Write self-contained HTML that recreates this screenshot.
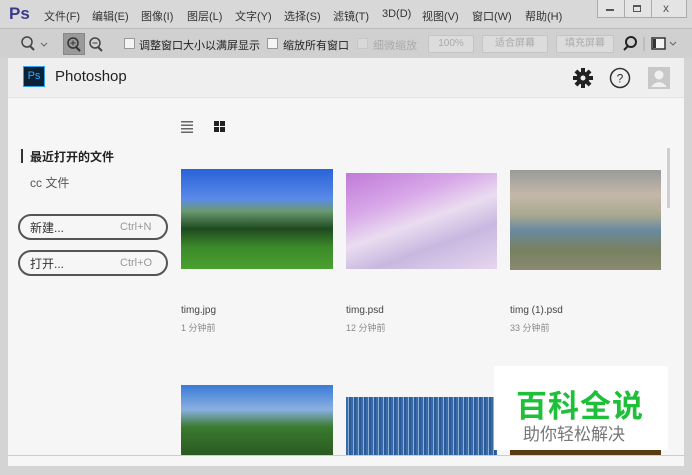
<!DOCTYPE html>
<html><head><meta charset="utf-8"><style>
*{margin:0;padding:0;box-sizing:border-box}
body{width:692px;height:475px;overflow:hidden;background:#d4d4d4;font-family:"Liberation Sans","Noto Sans CJK SC",sans-serif;position:relative}
.a{position:absolute}
.m{font-size:11px;color:#333;top:8px}
.tb{font-size:11px;color:#222}
.dis{color:#aaa}
.btn{border:1px solid #c4c4c4;background:#dcdcdc;color:#aaa;font-size:10px;text-align:center;line-height:16px;height:18px;top:35px}
.cb{width:11px;height:11px;border:1px solid #999;background:#f4f4f4;top:38px}
.fn{font-size:10px;color:#444}
.tm{font-size:9px;color:#888}
</style></head><body>
<div class="a" style="left:0;top:0;width:692px;height:28px;background:#d8d8d8"></div>
<div class="a" style="left:9px;top:4px;font-size:17px;font-weight:bold;color:#3a3a8c">Ps</div>
<div class="a m" style="left:44px">文件(F)</div>
<div class="a m" style="left:92px">编辑(E)</div>
<div class="a m" style="left:141px">图像(I)</div>
<div class="a m" style="left:187px">图层(L)</div>
<div class="a m" style="left:235px">文字(Y)</div>
<div class="a m" style="left:284px">选择(S)</div>
<div class="a m" style="left:333px">滤镜(T)</div>
<div class="a m" style="left:382px">3D(D)</div>
<div class="a m" style="left:422px">视图(V)</div>
<div class="a m" style="left:472px">窗口(W)</div>
<div class="a m" style="left:525px">帮助(H)</div>
<div class="a" style="left:597px;top:0;width:90px;height:18px;border:1px solid #aaa;border-top:0;background:#e4e4e4"></div>
<div class="a" style="left:624px;top:0;width:1px;height:18px;background:#aaa"></div>
<div class="a" style="left:651px;top:0;width:1px;height:18px;background:#aaa"></div>
<div class="a" style="left:606px;top:9px;width:8px;height:2px;background:#555"></div>
<div class="a" style="left:633px;top:5px;width:8px;height:7px;border:2px solid #555;border-width:2px 1px 1px 1px"></div>
<div class="a" style="left:663px;top:1px;font-size:12px;color:#555">x</div>
<div class="a" style="left:0;top:28px;width:692px;height:30px;background:#d0d0d0;border-top:1px solid #bbb"></div>
<svg class="a" style="left:20px;top:36px" width="30" height="16"><circle cx="7" cy="6" r="5" fill="none" stroke="#444" stroke-width="1.5"/><line x1="10" y1="10" x2="14" y2="14" stroke="#444" stroke-width="2"/><path d="M21 7l3 3 3-3" fill="none" stroke="#666"/></svg>
<div class="a" style="left:63px;top:33px;width:22px;height:22px;background:#9a9a9a;border:1px solid #888"></div>
<svg class="a" style="left:66px;top:37px" width="40" height="16"><circle cx="7" cy="6" r="5" fill="none" stroke="#333" stroke-width="1.5"/><line x1="10" y1="10" x2="14" y2="14" stroke="#333" stroke-width="2"/><path d="M4.5 6h5M7 3.5v5" stroke="#333"/><circle cx="29" cy="6" r="5" fill="none" stroke="#444" stroke-width="1.5"/><line x1="32" y1="10" x2="36" y2="14" stroke="#444" stroke-width="2"/><path d="M26.5 6h5" stroke="#444"/></svg>
<div class="a cb" style="left:124px"></div>
<div class="a tb" style="left:139px;top:37px">调整窗口大小以满屏显示</div>
<div class="a cb" style="left:267px"></div>
<div class="a tb" style="left:283px;top:37px">缩放所有窗口</div>
<div class="a cb" style="left:357px;border-color:#c8c8c8;background:#d8d8d8"></div>
<div class="a tb dis" style="left:373px;top:37px">细微缩放</div>
<div class="a btn" style="left:428px;width:46px">100%</div>
<div class="a btn" style="left:482px;width:66px">适合屏幕</div>
<div class="a btn" style="left:556px;width:58px">填充屏幕</div>
<svg class="a" style="left:622px;top:35px" width="60" height="18"><circle cx="9" cy="7" r="5" fill="none" stroke="#222" stroke-width="2"/><line x1="6" y1="11" x2="2" y2="15" stroke="#222" stroke-width="2"/><line x1="22" y1="2" x2="22" y2="16" stroke="#aaa"/><rect x="30" y="3" width="13" height="11" fill="#f4f4f4" stroke="#333" stroke-width="1.5"/><rect x="31" y="4" width="3" height="9" fill="#333"/><path d="M48 7l3 3 3-3" fill="none" stroke="#666"/></svg>
<div class="a" style="left:8px;top:58px;width:676px;height:408px;background:#f6f6f6"></div>
<div class="a" style="left:8px;top:58px;width:676px;height:40px;background:#efefef;border-bottom:1px solid #e2e2e2"></div>
<div class="a" style="left:23px;top:66px;width:22px;height:21px;background:#0b2236;border:1px solid #2fa3e6;color:#31a8ff;font-size:11px;line-height:19px;text-align:center">Ps</div>
<div class="a" style="left:55px;top:68px;font-size:15px;color:#222">Photoshop</div>
<svg class="a" style="left:572px;top:67px" width="100" height="22"><g transform="translate(11,11)" fill="#222"><circle r="6.5"/><g id="t"><rect x="-2" y="-10" width="4" height="20"/></g><use href="#t" transform="rotate(45)"/><use href="#t" transform="rotate(90)"/><use href="#t" transform="rotate(135)"/><circle r="2.5" fill="#efefef"/></g><circle cx="48" cy="11" r="9.5" fill="none" stroke="#333" stroke-width="1.5"/><text x="48" y="15.5" font-size="12" text-anchor="middle" fill="#333" font-family="Liberation Sans">?</text><rect x="76" y="0" width="22" height="22" fill="#c8c8c8"/><circle cx="87" cy="8" r="4.5" fill="#f0f0f0"/><path d="M79 20q8-10 16 0z" fill="#f0f0f0"/></svg>
<svg class="a" style="left:180px;top:120px" width="50" height="14"><g fill="#666"><rect x="1" y="1" width="12" height="1.5"/><rect x="1" y="4.5" width="12" height="1.5"/><rect x="1" y="8" width="12" height="1.5"/><rect x="1" y="11.5" width="12" height="1.5"/></g><g fill="#222"><rect x="34" y="1" width="5" height="5"/><rect x="40" y="1" width="5" height="5"/><rect x="34" y="7" width="5" height="5"/><rect x="40" y="7" width="5" height="5"/></g></svg>
<div class="a" style="left:21px;top:149px;width:2px;height:14px;background:#333"></div>
<div class="a" style="left:30px;top:148px;font-size:12px;color:#222;font-weight:bold">最近打开的文件</div>
<div class="a" style="left:30px;top:174px;font-size:12px;color:#555">cc 文件</div>
<div class="a" style="left:18px;top:214px;width:150px;height:26px;border:2px solid #555;border-radius:13px"></div>
<div class="a" style="left:30px;top:219px;font-size:12px;color:#333">新建...</div>
<div class="a" style="left:120px;top:221px;font-size:11px;color:#999">Ctrl+N</div>
<div class="a" style="left:18px;top:250px;width:150px;height:26px;border:2px solid #555;border-radius:13px"></div>
<div class="a" style="left:30px;top:255px;font-size:12px;color:#333">打开...</div>
<div class="a" style="left:120px;top:257px;font-size:11px;color:#999">Ctrl+O</div>
<div class="a" style="left:181px;top:169px;width:152px;height:100px;background:linear-gradient(180deg,#2a62d8 0%,#5a8ae8 30%,#6a9a70 42%,#1f4a20 60%,#3c8a2a 78%,#4aa030 100%)"></div>
<div class="a" style="left:346px;top:173px;width:151px;height:96px;background:linear-gradient(160deg,#c07ad8 0%,#d8a8e8 30%,#eadcf0 50%,#c8b8e0 70%,#e6d6ee 100%)"></div>
<div class="a" style="left:510px;top:170px;width:151px;height:100px;background:linear-gradient(180deg,#9a9a9a 0%,#c4b8a8 25%,#a8a890 45%,#6a8aa0 60%,#788060 80%,#8a8a70 100%)"></div>
<div class="a fn" style="left:181px;top:305px">timg.jpg</div>
<div class="a tm" style="left:181px;top:321px">1 分钟前</div>
<div class="a fn" style="left:346px;top:305px">timg.psd</div>
<div class="a tm" style="left:346px;top:321px">12 分钟前</div>
<div class="a fn" style="left:510px;top:305px">timg (1).psd</div>
<div class="a tm" style="left:510px;top:321px">33 分钟前</div>
<div class="a" style="left:181px;top:385px;width:152px;height:70px;background:linear-gradient(180deg,#3a7ad8 0%,#8ab0e0 35%,#3a7a30 60%,#2a5a20 100%)"></div>
<div class="a" style="left:346px;top:397px;width:151px;height:58px;background:repeating-linear-gradient(90deg,#3a6aa8 0 2px,#8ab0d8 2px 3px,#2a5a98 3px 5px)"></div>
<div class="a" style="left:510px;top:448px;width:151px;height:8px;background:#5a3a10"></div>
<div class="a" style="left:494px;top:366px;width:174px;height:84px;background:#fff"></div>
<div class="a" style="left:516px;top:381px;font-size:31px;font-weight:bold;color:#1ec03a;letter-spacing:1px">百科全说</div>
<div class="a" style="left:523px;top:420px;font-size:17px;color:#777">助你轻松解决</div>
<div class="a" style="left:667px;top:148px;width:3px;height:60px;background:#cfcfcf"></div>
<div class="a" style="left:8px;top:455px;width:676px;height:11px;background:#f6f6f6;border-top:1px solid #ccc"></div>
</body></html>
